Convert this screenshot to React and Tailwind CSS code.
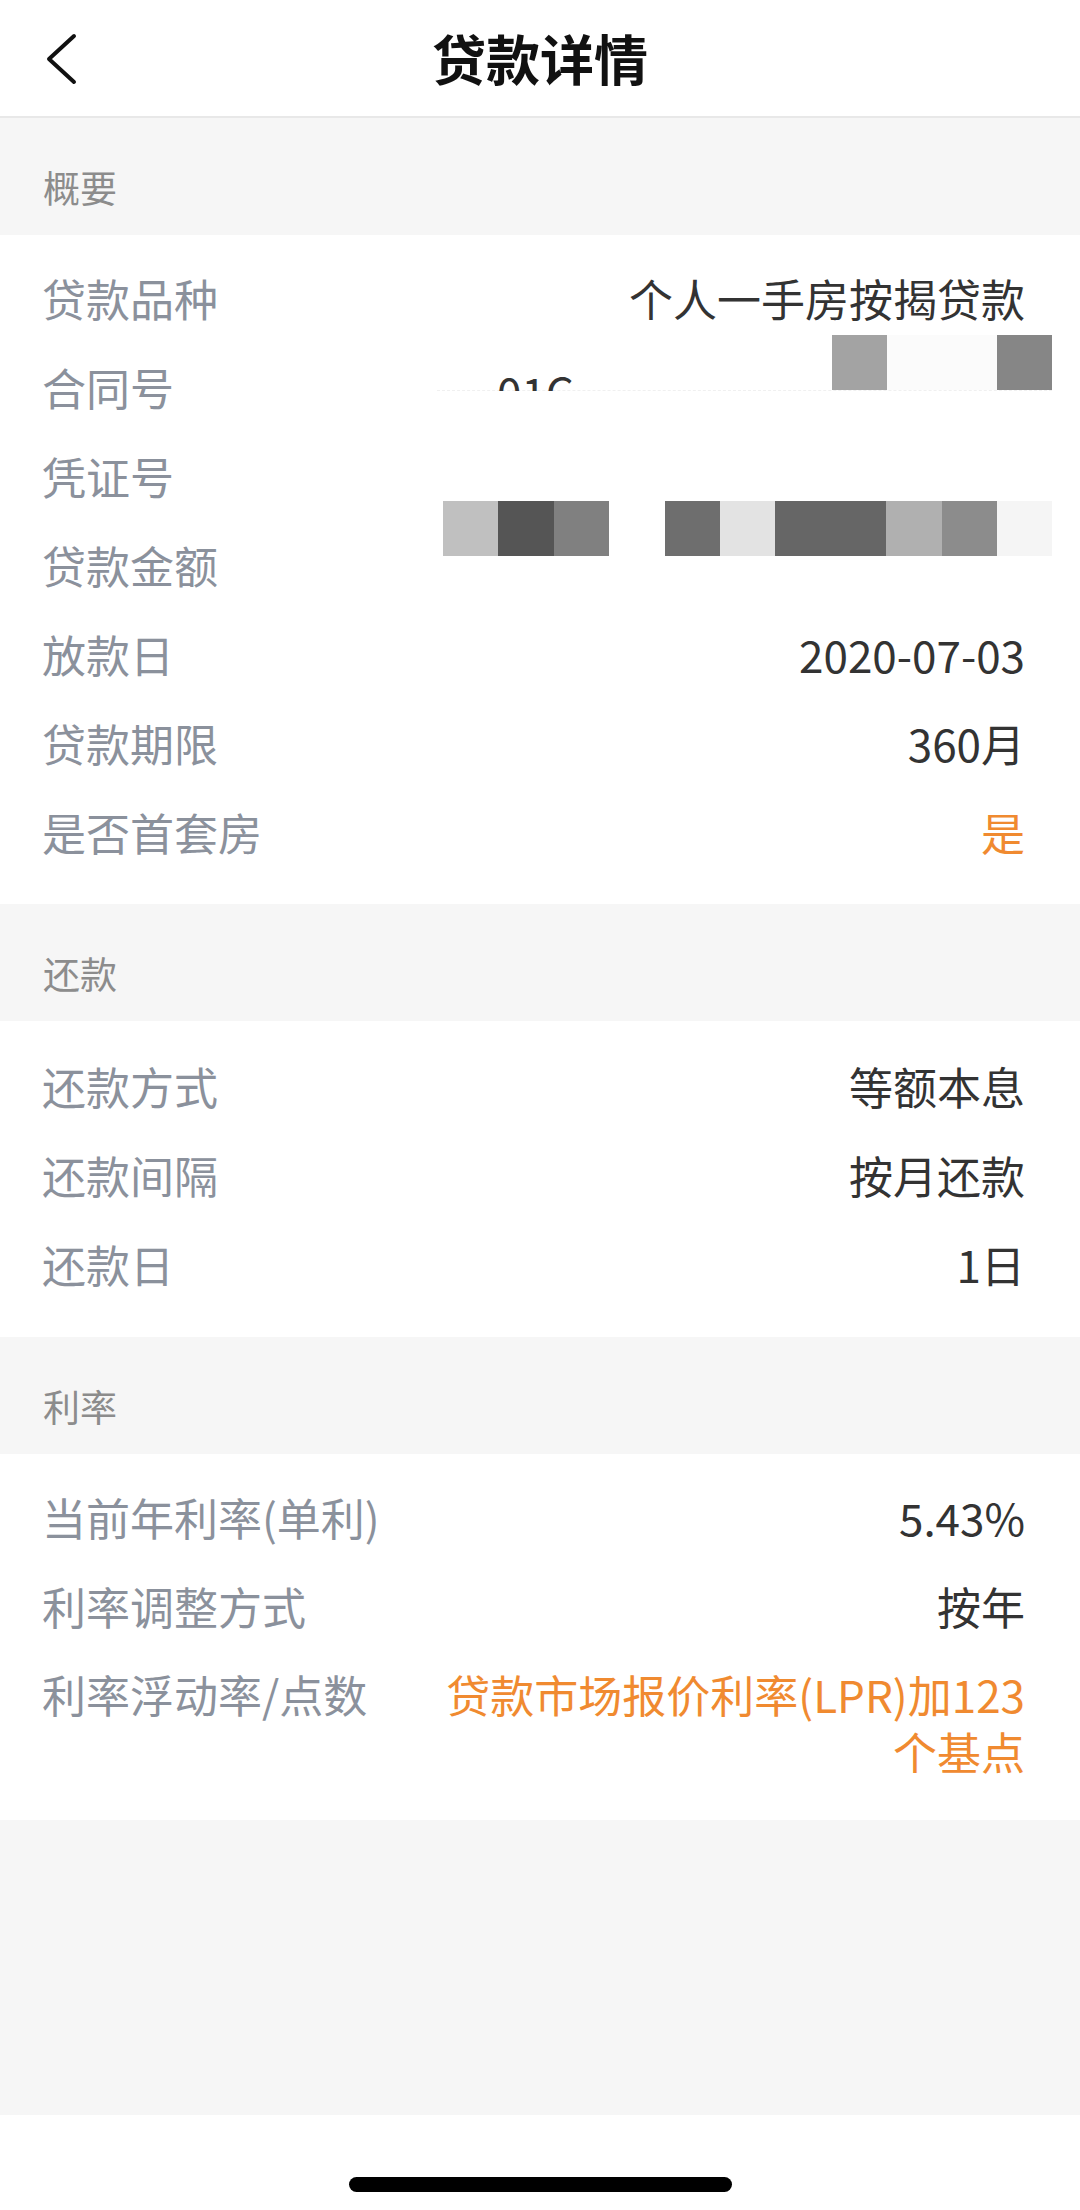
const summary = [
  ['贷款品种', '个人一手房按揭贷款'],
  ['合同号', ''],
  ['凭证号', ''],
  ['贷款金额', ''],
  ['放款日', '2020-07-03'],
  ['贷款期限', '360月'],
  ['是否首套房', '是', true],
]

const repay = [
  ['还款方式', '等额本息'],
  ['还款间隔', '按月还款'],
  ['还款日', '1日'],
]

// mosaic blocks over the amount row
const mosaic = ['#c0c0c0', '#555555', '#808080', '#ffffff', '#6e6e6e', '#e3e3e3', '#666666', '#666666', '#b0b0b0', '#8c8c8c', '#f5f5f5']

function SectionTitle({ children }) {
  return (
    <div className="h-[117px] pl-[43px] pt-[51px] text-[37px] leading-[37px] text-[#8c8c8c]">{children}</div>
  )
}

function Row({ label, value, orange }) {
  return (
    <div className="flex h-[89px] items-center justify-between pl-[42px] pr-[55px] text-[44px] leading-[57px]">
      <span className="text-[#8b919c]">{label}</span>
      <span className={orange ? 'text-[#f08a30]' : 'text-[#333333]'}>{value}</span>
    </div>
  )
}

export default function App() {
  return (
    <div className="flex h-[2210px] w-[1080px] flex-col bg-[#f6f6f6] font-['Noto_Sans_CJK_SC',sans-serif]">
      <header className="grid h-[118px] grid-cols-[1fr_auto_1fr] items-center border-b-2 border-[#e8e8e8] bg-white">
        <div className="pl-[44px] pt-[2px]">
          <svg width="36" height="54" viewBox="0 0 36 54" fill="none">
            <path d="M30 4 L5 27 L30 50" stroke="#111" strokeWidth="4" strokeLinecap="round" strokeLinejoin="round" />
          </svg>
        </div>
        <h1 className="text-[54px] font-bold leading-none text-[#111]">贷款详情</h1>
        <div />
      </header>

      <SectionTitle>概要</SectionTitle>
      <section className="relative bg-white pb-[27px] pt-[19px]">
        {summary.map(([l, v, o]) => (
          <Row key={l} label={l} value={v} orange={o} />
        ))}

        {/* redacted contract number */}
        <div className="absolute left-[437px] top-[155px] w-[615px] border-t border-dashed border-[#f0f0f0]" />
        <div className="absolute left-[497px] top-[142px] h-[14px] overflow-hidden">
          <div className="-mt-[8px] text-[44px] leading-[44px] text-[#333]">01C</div>
        </div>
        <div className="absolute left-[832px] top-[100px] h-[55px] w-[55px] bg-[#a3a3a3]" />
        <div className="absolute left-[887px] top-[100px] h-[55px] w-[110px] bg-[#fbfbfb]" />
        <div className="absolute left-[997px] top-[100px] h-[55px] w-[55px] bg-[#868686]" />

        {/* redacted amount */}
        <div className="absolute left-[443px] top-[266px] flex h-[55px]">
          {mosaic.map((c, i) => (
            <div key={i} className="h-full w-[55.4px]" style={{ backgroundColor: c }} />
          ))}
        </div>
      </section>

      <SectionTitle>还款</SectionTitle>
      <section className="bg-white pb-[28px] pt-[21px]">
        {repay.map(([l, v]) => (
          <Row key={l} label={l} value={v} />
        ))}
      </section>

      <SectionTitle>利率</SectionTitle>
      <section className="bg-white pb-[25px] pt-[19px]">
        <Row label="当前年利率(单利)" value="5.43%" />
        <Row label="利率调整方式" value="按年" />
        <div className="flex items-start justify-between py-[15px] pl-[42px] pr-[55px] text-[44px] leading-[57px]">
          <span className="text-[#8b919c]">利率浮动率/点数</span>
          <span className="text-right text-[#f08a30]">
            贷款市场报价利率(LPR)加123
            <br />
            个基点
          </span>
        </div>
      </section>

      <div className="flex-1" />

      <div className="flex h-[95px] items-start justify-center bg-white pt-[62px]">
        <div className="h-[15px] w-[383px] rounded-full bg-black" />
      </div>
    </div>
  )
}
